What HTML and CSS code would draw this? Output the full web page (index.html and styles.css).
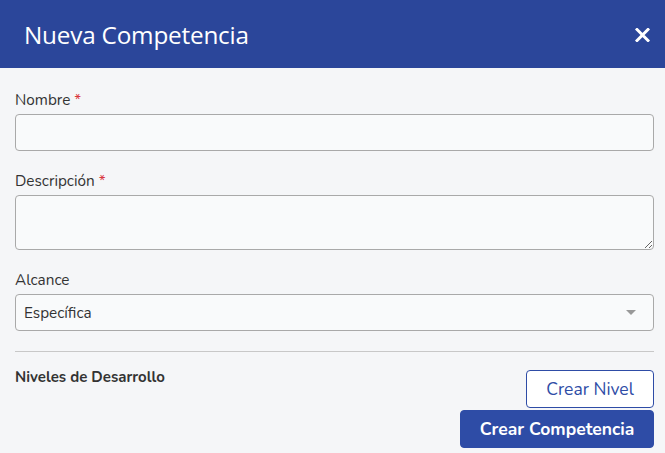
FILE: index.html
```html
<!DOCTYPE html>
<html lang="es">
<head>
<meta charset="utf-8">
<title>Nueva Competencia</title>
<link rel="stylesheet" href="styles.css">
</head>
<body>
<div class="modal">
  <header class="modal-header">
    <h1 class="modal-title">Nueva Competencia</h1>
    <button class="close-btn" aria-label="Cerrar">
      <svg width="15" height="14" viewBox="0 0 15 14"><path d="M2 1.5 L13 12.5 M13 1.5 L2 12.5" stroke="#fff" stroke-width="3" stroke-linecap="square"/></svg>
    </button>
  </header>
  <div class="modal-body">
    <div class="field">
      <label class="label">Nombre <span class="req">*</span></label>
      <input class="input" type="text">
    </div>
    <div class="field">
      <label class="label">Descripción <span class="req">*</span></label>
      <textarea class="input textarea"></textarea>
    </div>
    <div class="field">
      <label class="label">Alcance</label>
      <div class="select">
        <span>Específica</span>
        <span class="caret"></span>
      </div>
    </div>
    <hr class="divider">
    <div class="levels">
      <div class="levels-title">Niveles de Desarrollo</div>
      <div class="actions">
        <button class="btn btn-outline">Crear Nivel</button>
        <button class="btn btn-primary">Crear Competencia</button>
      </div>
    </div>
  </div>
</div>
</body>
</html>
```
FILE: styles.css
```css
* { box-sizing: border-box; }
html, body { margin: 0; padding: 0; }
body {
  background: #f5f6f8;
  font-family: "Nunito", "Lato", "Open Sans", sans-serif;
  color: #333;
  width: 665px;
  height: 453px;
  overflow: hidden;
}
.modal-header {
  height: 68px;
  background: #2b469a;
  display: flex;
  align-items: center;
  justify-content: space-between;
  padding: 0 14px 0 24px;
}
.modal-title {
  margin: 0;
  color: #fff;
  font-family: "Open Sans", sans-serif;
  font-weight: 500;
  font-size: 24.3px;
  letter-spacing: -0.2px;
  padding-top: 1px;
}
.close-btn {
  background: none;
  border: 0;
  padding: 0;
  width: 15px;
  height: 14px;
  display: flex;
  margin-right: 1px;
  margin-top: 2px;
}
.modal-body {
  padding: 22px 11px 0 15px;
}
.field { margin-bottom: 20px; }
.label {
  display: block;
  font-size: 15.3px;
  line-height: 20px;
  color: #333;
  margin-bottom: 4px;
}
.req { color: #d9363e; }
.input {
  display: block;
  width: 639px;
  height: 37px;
  border: 1px solid #a9a9a9;
  border-radius: 4px;
  background: #f9fafb;
  font: inherit;
  margin: 0;
}
.textarea { height: 55px; resize: vertical; }
.select {
  width: 639px;
  height: 37px;
  border: 1px solid #a9a9a9;
  border-radius: 4px;
  background: #f9fafb;
  display: flex;
  align-items: center;
  justify-content: space-between;
  padding: 0 17px 0 8px;
  font-size: 15.3px;
  color: #333;
}
.caret {
  width: 0; height: 0;
  border-left: 5px solid transparent;
  border-right: 5px solid transparent;
  border-top: 5px solid #999;
}
.divider {
  margin: 17px 0 0;
  width: 639px;
  border: 0;
  border-top: 1px solid #c8c8c8;
}
.levels {
  display: flex;
  justify-content: space-between;
  width: 639px;
  padding-top: 17px;
}
.levels-title {
  font-size: 15px;
  font-weight: 700;
  color: #333;
  margin-top: -2px;
}
.actions {
  display: flex;
  flex-direction: column;
  align-items: flex-end;
  gap: 2px;
  margin-top: 1px;
}
.btn {
  font-family: inherit;
  font-size: 17.5px;
  height: 38px;
  border-radius: 4px;
  cursor: pointer;
  padding: 0;
}
.btn-outline {
  width: 128px;
  background: #fff;
  border: 1px solid #2e4ca6;
  color: #2e4ca6;
}
.btn-primary {
  width: 194px;
  background: #2e4ca6;
  border: 1px solid #2e4ca6;
  color: #fff;
  font-weight: 700;
}
```
